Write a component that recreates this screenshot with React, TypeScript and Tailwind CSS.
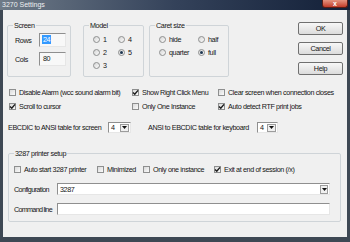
import React from "react";

function CheckBox({ checked }: { checked?: boolean }) {
  return (
    <span className="flex h-[7px] w-[7px] shrink-0 items-center justify-center border border-[#8e8f8f] bg-gradient-to-br from-[#dadada] to-[#fbfbfb]">
      {checked ? (
        <svg viewBox="0 0 7 7" className="h-[7px] w-[7px] overflow-visible">
          <path d="M1 3.4 L2.8 5.3 L6 1.4" stroke="#1b1b1b" strokeWidth="1.4" fill="none" />
        </svg>
      ) : null}
    </span>
  );
}

function CheckItem({ label, checked, className = "" }: { label: string; checked?: boolean; className?: string }) {
  return (
    <div className={`flex items-center gap-[3px] whitespace-nowrap ${className}`}>
      <CheckBox checked={checked} />
      <span>{label}</span>
    </div>
  );
}

function Radio({ label, checked, className = "" }: { label: string; checked?: boolean; className?: string }) {
  return (
    <div className={`flex h-[13px] items-center gap-[3px] whitespace-nowrap ${className}`}>
      <span className="flex h-[7px] w-[7px] shrink-0 items-center justify-center rounded-full border border-[#8e8f8f] bg-gradient-to-br from-[#d6d6d6] to-[#fbfbfb]">
        {checked ? <span className="h-[3px] w-[3px] rounded-full bg-[#1d3550]" /> : null}
      </span>
      <span>{label}</span>
    </div>
  );
}

function Arrow() {
  return (
    <svg viewBox="0 0 5 3" className="h-[3px] w-[5px]">
      <path d="M0 0 H5 L2.5 3 Z" fill="#111" />
    </svg>
  );
}

function SmallSelect({ value, className = "" }: { value: string; className?: string }) {
  return (
    <div className={`flex h-[11px] items-center border border-[#8f8f8f] border-b-[#e6e6e6] border-r-[#e6e6e6] bg-white ${className}`}>
      <span className="flex-1 pl-[2px]">{value}</span>
      <span className="mr-[1px] flex h-[8px] w-[9px] items-center justify-center border border-[#9c9c9c] bg-[#f0f0f0]">
        <Arrow />
      </span>
    </div>
  );
}

function Button({ label }: { label: string }) {
  return (
    <div className="flex h-[13px] w-[45px] items-center justify-center rounded-[2px] border border-[#707070] bg-gradient-to-b from-[#f7f7f7] to-[#dcdcdc]">
      {label}
    </div>
  );
}

function Group({ title, className = "", children }: { title: string; className?: string; children: React.ReactNode }) {
  return (
    <fieldset className={`rounded-[2px] border border-[#cfd4d8] ${className}`}>
      <legend className="ml-[5px] px-[1px] leading-[9px]">{title}</legend>
      {children}
    </fieldset>
  );
}

export default function App() {
  return (
    <div className="flex h-[242px] w-[350px] flex-col overflow-hidden bg-[#3e4854] font-['Liberation_Sans',Arial,sans-serif] text-[7.2px] leading-[9px] tracking-[-0.38px] text-[#151515]">
      <div className="flex h-[10px] shrink-0 items-start justify-between bg-gradient-to-r from-[#6f7b88] via-[#34425a] to-[#132038]">
        <span className="ml-[2px] mt-[1px] text-[7px] leading-[8px] tracking-normal text-[#eef0f2]">
          3270 Settings
        </span>
        <div className="mr-[2px] flex h-[8px] w-[26px] items-center justify-center rounded-b-[3px] border border-t-0 border-[#5b1d15] bg-gradient-to-b from-[#e5937f] to-[#c23a28] text-[7px] font-bold leading-[7px] tracking-normal text-white">
          x
        </div>
      </div>

      <div className="mx-[3px] h-[227px] shrink-0 bg-[#f0f0f0]">
        <div className="flex items-start pl-[4px] pt-[11px]">
          <Group title="Screen" className="h-[56px] w-[64px]">
            <div className="flex flex-col gap-[5px] pl-[7px] pt-[3px]">
              <div className="flex h-[14px] items-center">
                <span className="w-[24px]">Rows</span>
                <div className="h-[14px] w-[27px] border border-[#8f8f8f] border-b-[#e6e6e6] border-r-[#e6e6e6] bg-[#f8f8f8] pl-[2px] pt-[1px]">
                  <span className="bg-[#3399ff] px-[1px] text-white">24</span>
                </div>
              </div>
              <div className="flex h-[14px] items-center">
                <span className="w-[24px]">Cols</span>
                <div className="h-[14px] w-[27px] border border-[#8f8f8f] border-b-[#e6e6e6] border-r-[#e6e6e6] bg-[#f8f8f8] pl-[3px] pt-[1px]">
                  80
                </div>
              </div>
            </div>
          </Group>

          <Group title="Model" className="ml-[12px] h-[56px] w-[61px]">
            <div className="grid grid-cols-[25px_25px] pl-[9px] pt-[3px]">
              <Radio label="1" />
              <Radio label="4" />
              <Radio label="2" />
              <Radio label="5" checked />
              <Radio label="3" />
            </div>
          </Group>

          <Group title="Caret size" className="ml-[5px] h-[56px] w-[78px]">
            <div className="grid grid-cols-[39px_30px] pl-[9px] pt-[3px]">
              <Radio label="hide" />
              <Radio label="half" />
              <Radio label="quarter" />
              <Radio label="full" checked />
            </div>
          </Group>

          <div className="ml-[69px] mt-[1px] flex flex-col gap-[7px]">
            <Button label="OK" />
            <Button label="Cancel" />
            <Button label="Help" />
          </div>
        </div>

        <div className="mt-[8px] pl-[6px]">
          <div className="flex h-[14px] items-center">
            <CheckItem label="Disable Alarm (wcc sound alarm bit)" className="w-[123px]" />
            <CheckItem label="Show Right Click Menu" checked className="w-[86px]" />
            <CheckItem label="Clear screen when connection closes" />
          </div>
          <div className="flex h-[14px] items-center">
            <CheckItem label="Scroll to cursor" checked className="w-[123px]" />
            <CheckItem label="Only One Instance" className="w-[86px]" />
            <CheckItem label="Auto detect RTF print jobs" checked />
          </div>
        </div>

        <div className="mt-[9px] flex h-[11px] items-center pl-[5px]">
          <span className="w-[100px] whitespace-nowrap">EBCDIC to ANSI table for screen</span>
          <SmallSelect value="4" className="w-[23px]" />
          <span className="ml-[17px] w-[109px] whitespace-nowrap">ANSI to EBCDIC table for keyboard</span>
          <SmallSelect value="4" className="w-[21px]" />
        </div>

        <Group title="3287 printer setup" className="ml-[5px] mt-[16px] h-[73px] w-[333px]">
          <div className="flex flex-col pl-[5px] pt-[5px]">
            <div className="flex h-[12px] items-center">
              <CheckItem label="Auto start 3287 printer" className="w-[83px]" />
              <CheckItem label="Minimized" className="w-[46px]" />
              <CheckItem label="Only one instance" className="w-[71px]" />
              <CheckItem label="Exit at end of session (/x)" checked />
            </div>
            <div className="mt-[8px] flex h-[12px] items-center">
              <span className="w-[43px] whitespace-nowrap tracking-[-0.6px]">Configuration</span>
              <div className="flex h-[12px] w-[273px] items-center border border-[#8f8f8f] border-b-[#e6e6e6] border-r-[#e6e6e6] bg-white">
                <span className="flex-1 pl-[2px]">3287</span>
                <span className="mr-[1px] flex h-[9px] w-[8px] items-center justify-center border border-[#9c9c9c] bg-[#f0f0f0]">
                  <Arrow />
                </span>
              </div>
            </div>
            <div className="mt-[8px] flex h-[12px] items-center">
              <span className="w-[43px] whitespace-nowrap tracking-[-0.7px]">Command line</span>
              <div className="h-[12px] w-[273px] border border-[#8f8f8f] border-b-[#e6e6e6] border-r-[#e6e6e6] bg-white" />
            </div>
          </div>
        </Group>
      </div>
    </div>
  );
}
